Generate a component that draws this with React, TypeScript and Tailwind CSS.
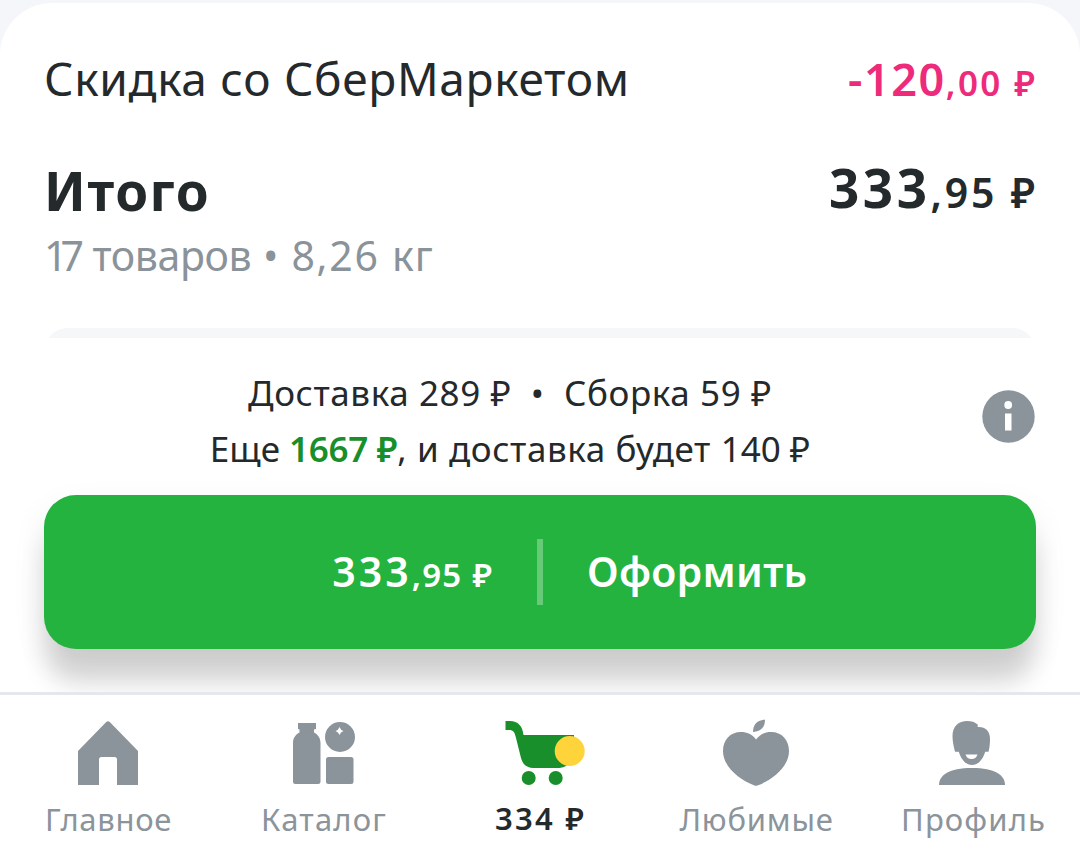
import React from "react";

type Tab = {
  label: string;
  icon: React.ReactNode;
  labelClass: string;
};

const HomeIcon = () => (
  <svg width="96" height="74" viewBox="0 0 96 74" fill="currentColor">
    <path d="M18 35 46 6.300Q48 4 50 6.300L78 35V69H57V43.500Q57 41 54.500 41H41.500Q39 41 39 43.500V69H18Z" />
  </svg>
);

const CatalogIcon = () => (
  <svg width="96" height="74" viewBox="0 0 96 74" fill="currentColor">
    <path d="M22 7H40V13L38 13.500V16.500C42 18.500 44.500 22 44.500 27V65.500Q44.500 68 42 68H19.500Q17 68 17 65.500V27C17 22 19.500 18.500 23.500 16.500V13.500L22 13Z" />
    <path
      fillRule="evenodd"
      d="M64 6A15 15 0 1 1 64 36A15 15 0 1 1 64 6ZM63.500 11Q64.500 14 67.500 15Q64.500 16 63.500 19Q62.500 16 59.500 15Q62.500 14 63.500 11Z"
    />
    <rect x="50" y="41" width="27.500" height="27" rx="2.500" />
  </svg>
);

const CartIcon = () => (
  <svg width="96" height="74" viewBox="0 0 96 74">
    <g fill="#188f2a">
      <path d="M13.500 5H18C26 5 30.500 10 31.500 19H82V32C80 45 76 52 66 52H43C35 52 31 49 29 42L24 22C22.500 16 21.500 14 17 14H13.500Z" />
      <circle cx="36.700" cy="62" r="7" />
      <circle cx="63.700" cy="62" r="7" />
    </g>
    <circle cx="77.700" cy="35" r="15" fill="#ffd43b" />
  </svg>
);

const FavouriteIcon = () => (
  <svg width="96" height="74" viewBox="0 0 96 74" fill="currentColor">
    <path d="M48 23.500C52 18 57 16 63 16C74 16 81 24 81 35C81 51 64 64 50 69.300Q48 70.300 46 69.300C32 64 15 51 15 35C15 24 22 16 33 16C39 16 44 18 48 23.500Z" />
    <path d="M45 16C45 8.500 49 4 57 3.700C57 11 53 15.800 45 16Z" />
  </svg>
);

const ProfileIcon = () => (
  <svg width="96" height="74" viewBox="0 0 96 74" fill="currentColor">
    <path
      fillRule="evenodd"
      d="M31 35.700C29.500 30 28.500 25 28.500 20C28.500 10 35 5 43 5C47.500 5 51 6 53.700 8.500V11C61 10.500 66 14.500 66 23C66 28 65.500 32 64.500 35.700H61.200C59 43.500 54 49 48 49C42 49 37 43.500 34.800 35.700ZM41.500 38.500Q43 43 47.500 43Q52 43 53.500 38.500Z"
    />
    <path d="M15 69C15 59 25 52 48 52C71 52 81 59 81 69Z" />
  </svg>
);

const tabs: Tab[] = [
  {
    label: "Главное",
    icon: <HomeIcon />,
    labelClass: "pl-px tracking-[0.7px]",
  },
  {
    label: "Каталог",
    icon: <CatalogIcon />,
    labelClass: "tracking-[1.2px]",
  },
  {
    label: "334 ₽",
    icon: <CartIcon />,
    labelClass: "-mt-px pl-px text-[#24292b] font-semibold tracking-[2.3px]",
  },
  {
    label: "Любимые",
    icon: <FavouriteIcon />,
    labelClass: "pl-px tracking-[0.8px]",
  },
  {
    label: "Профиль",
    icon: <ProfileIcon />,
    labelClass: "pl-[3px] tracking-[1.1px]",
  },
];

const App = () => {
  return (
    <div className="flex h-[850px] w-[1080px] flex-col overflow-hidden bg-[#f5f6f9] pt-[3px] font-['Noto_Sans','Open_Sans',sans-serif] text-[#24292b]">
      <main className="flex h-[689px] shrink-0 flex-col overflow-hidden rounded-t-[52px] bg-white px-11 pt-[45px]">
        <section className="whitespace-nowrap">
          <div className="flex h-[60px] items-baseline justify-between leading-[60px]">
            <span className="text-[46px] tracking-[0.7px]">
              Скидка со СберМаркетом
            </span>
            <span className="mr-px text-[45px] font-semibold text-[#ee2a7b]">
              <span className="tracking-[1.5px]">-120</span>
              <span className="text-[35px] tracking-[2.4px]">,00 </span>
              <span className="text-[35px]">₽</span>
            </span>
          </div>

          <div className="mt-[52px] flex h-[60px] items-start justify-between">
            <h1 className="mt-px text-[53px] leading-[60px] font-bold tracking-[1.5px]">
              Итого
            </h1>
            <span className="mt-px mr-px text-[53px] leading-[54px] font-bold">
              <span className="tracking-[3.5px]">333</span>
              <span className="text-[41px] font-semibold tracking-[2.8px]">
                ,95{" "}
              </span>
              <span className="text-[41px] font-semibold">₽</span>
            </span>
          </div>

          <p className="mt-[10px] text-[41px] leading-[50px] text-[#8b939a]">
            <span className="tracking-[-7px]">1</span>
            <span className="tracking-[-1px]">7 </span>
            <span className="tracking-[-0.4px]">товаров</span>
            <span className="tracking-[1.2px]"> • </span>
            <span className="tracking-[1.7px]">8,26 </span>
            <span className="tracking-[1px]">кг</span>
          </p>
        </section>

        {/* top edge of the next card, cut off by the checkout panel */}
        <div className="mt-12 h-[10px] shrink-0 overflow-hidden">
          <div className="h-12 rounded-3xl bg-[#f6f7f9]" />
        </div>

        <section className="mt-[25px] flex h-[112px] items-center whitespace-nowrap">
          <div className="w-[932px] pt-[3px] text-center text-[35px] leading-[56px]">
            <p className="tracking-[0.6px]">
              Доставка 289 ₽ &nbsp;•&nbsp; Сборка 59 ₽
            </p>
            <p>
              Еще{" "}
              <span className="font-semibold tracking-[-0.3px] text-[#188f2a]">
                1667 ₽
              </span>
              <span className="tracking-[0.6px]">, и доставка будет </span>
              140 ₽
            </p>
          </div>
          <svg
            className="-mt-[5px] ml-[6px] shrink-0"
            width="53"
            height="53"
            viewBox="0 0 53 53"
          >
            <circle cx="26.500" cy="26.500" r="26.200" fill="#8b949b" />
            <circle cx="26.200" cy="15" r="3.900" fill="#fff" />
            <rect x="23" y="23.500" width="6.500" height="17" fill="#fff" />
          </svg>
        </section>

        <button
          type="button"
          className="mt-5 flex h-[154px] w-full shrink-0 items-center rounded-[32px] bg-[#24b33e] text-[41px] font-semibold whitespace-nowrap text-white shadow-[0_36px_26px_-2px_rgba(0,0,0,0.15),0_14px_34px_rgba(0,0,0,0.08)]"
        >
          <span className="w-[448px] text-right">
            <span className="tracking-[3px]">333</span>
            <span className="text-[33px] tracking-[1.3px]">,95 </span>
            <span className="text-[33px]">₽</span>
          </span>
          <span className="mr-11 ml-[45px] h-[66px] w-[6px] bg-white/30" />
          <span className="tracking-[0.3px]">Оформить</span>
        </button>
      </main>

      <nav className="flex grow border-t-[3px] border-[#e4e8ee] bg-white">
        {tabs.map((tab) => (
          <a
            key={tab.label}
            className="flex flex-1 flex-col items-center pt-[21px] text-[#8b949b]"
          >
            {tab.icon}
            <span className="mt-[9px] text-[31px] leading-[40px] whitespace-nowrap">
              <span className={`block ${tab.labelClass}`}>{tab.label}</span>
            </span>
          </a>
        ))}
      </nav>
    </div>
  );
};

export default App;
